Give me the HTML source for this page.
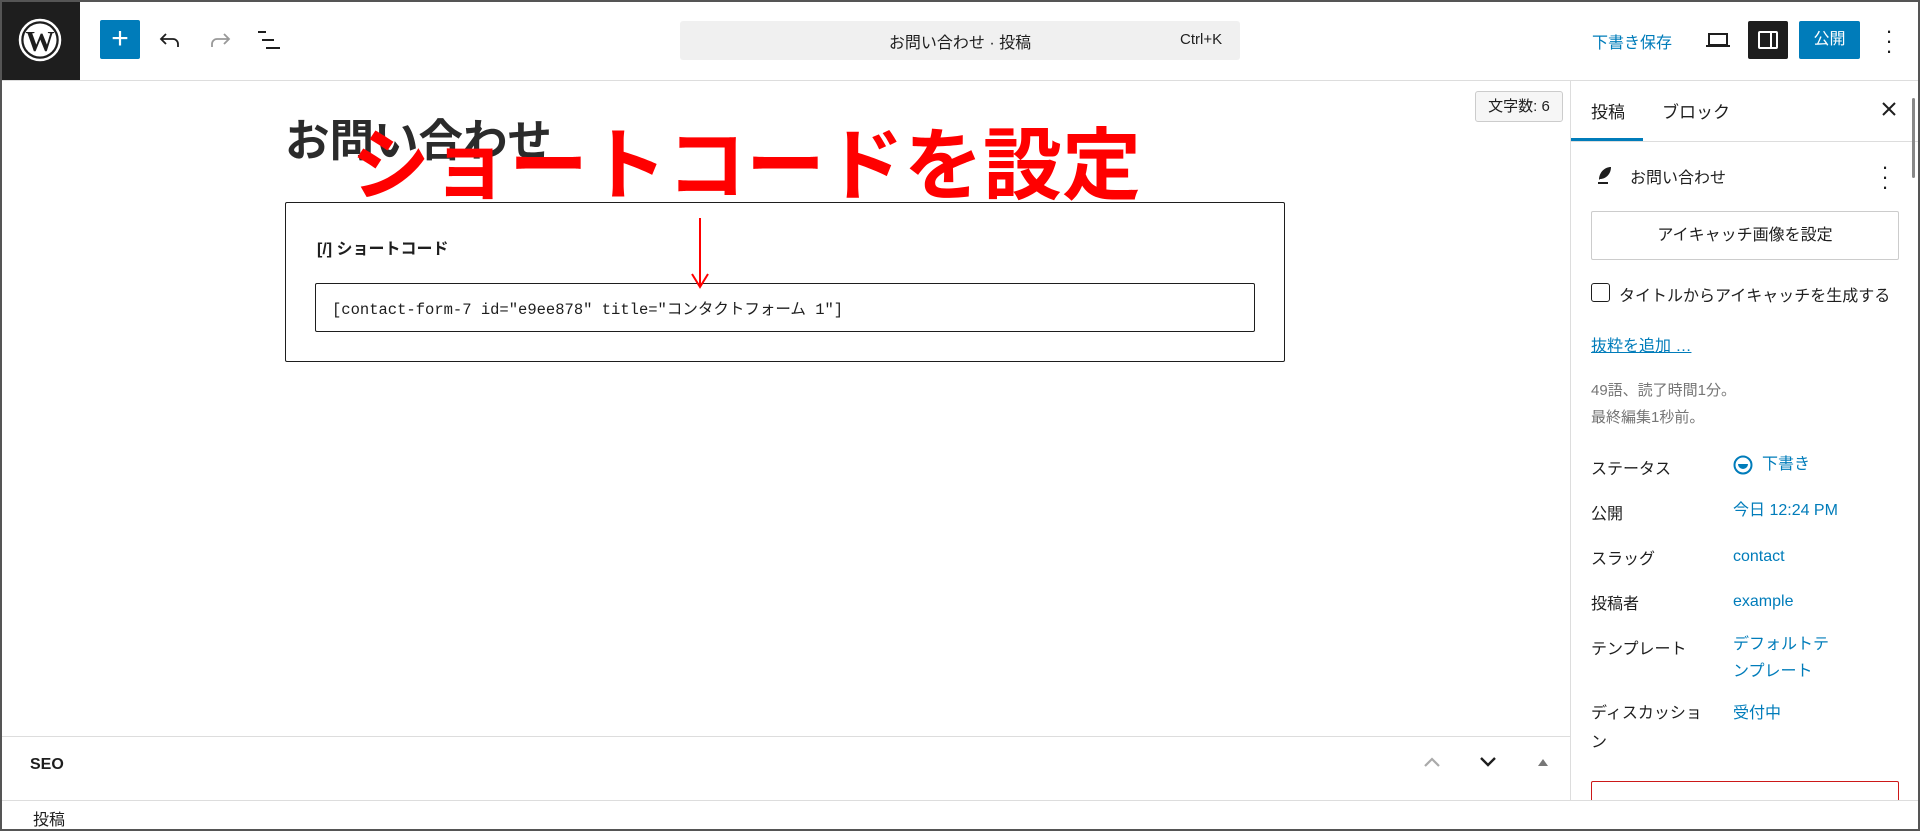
<!DOCTYPE html>
<html><head><meta charset="utf-8"><style>
*{box-sizing:border-box;margin:0;padding:0}
body{width:1920px;height:831px;overflow:hidden;background:#fff;font-family:"Liberation Sans","Noto Sans CJK JP",sans-serif;color:#1e1e1e;position:relative;font-size:16px}
.a{position:absolute}
.frame{position:absolute;left:0;top:0;width:1920px;height:831px;border:2px solid #555;pointer-events:none;z-index:50}
.blue{color:#007cba}
.row{position:absolute;left:1591px;font-size:16px}
.val{position:absolute;left:1733px;font-size:16px;color:#007cba;line-height:27px}
</style></head><body>
<div class="frame"></div>
<div class="a" style="left:0;top:0;width:1920px;height:81px;border-bottom:1px solid #ddd"></div>
<div class="a" style="left:0;top:0;width:80px;height:80px;background:#1e1e1e">
<svg class="a" style="left:18px;top:18px" width="44" height="44" viewBox="0 0 44 44"><circle cx="22" cy="22" r="20" fill="none" stroke="#fff" stroke-width="2.5"/><circle cx="22" cy="22" r="16.5" fill="#fff"/><text x="22" y="33" text-anchor="middle" font-family="Liberation Serif,serif" font-weight="bold" font-size="29" fill="#1e1e1e">W</text></svg></div>
<div class="a" style="left:100px;top:20px;width:40px;height:39px;background:#007cba;border-radius:2px;color:#fff;font-size:30px;line-height:37px;text-align:center">+</div>
<svg class="a" style="left:158px;top:28px" width="24" height="24" viewBox="0 0 24 24"><path d="M8 6 L3 11 L8 16 M3 11 H15 a5 5 0 0 1 5 5 V19" fill="none" stroke="#1e1e1e" stroke-width="1.8"/></svg>
<svg class="a" style="left:208px;top:28px" width="24" height="24" viewBox="0 0 24 24"><path d="M16 6 L21 11 L16 16 M21 11 H9 a5 5 0 0 0 -5 5 V19" fill="none" stroke="#999" stroke-width="1.8"/></svg>
<svg class="a" style="left:256px;top:28px" width="26" height="24" viewBox="0 0 26 24"><path d="M2 4 H10 M6 12 H18 M10 20 H24" stroke="#1e1e1e" stroke-width="2"/></svg>
<div class="a" style="left:680px;top:21px;width:560px;height:39px;background:#f0f0f0;border-radius:3px"></div>
<div class="a" style="left:680px;top:29px;width:560px;text-align:center;font-size:16px;color:#1e1e1e">お問い合わせ · 投稿</div>
<div class="a" style="left:1180px;top:31px;font-size:15px;color:#1e1e1e">Ctrl+K</div>
<div class="a blue" style="left:1592px;top:29px;font-size:16px">下書き保存</div>
<svg class="a" style="left:1704px;top:28px" width="28" height="24" viewBox="0 0 28 24"><rect x="5" y="6" width="18" height="11" fill="none" stroke="#1e1e1e" stroke-width="2"/><path d="M2 18 H26" stroke="#1e1e1e" stroke-width="2"/></svg>
<div class="a" style="left:1748px;top:21px;width:40px;height:38px;background:#1e1e1e;border-radius:2px"><div class="a" style="left:10px;top:10px;width:20px;height:18px;border:2px solid #fff;border-radius:2px"></div><div class="a" style="left:22px;top:10px;width:2px;height:18px;background:#fff"></div></div>
<div class="a" style="left:1799px;top:21px;width:61px;height:38px;background:#007cba;border-radius:2px;color:#fff;font-size:16px;line-height:38px;text-align:center">公開</div>
<div class="a" style="left:1884px;top:26px;font-size:22px;line-height:10px;width:10px;text-align:center">·<br>·<br>·</div>

<div class="a" style="left:1475px;top:91px;width:88px;height:31px;border:1px solid #ccc;border-radius:3px;background:#f6f6f6;font-size:15px;text-align:center;line-height:29px">文字数: 6</div>
<div class="a" style="left:285px;top:104px;font-size:44.5px;font-weight:bold;color:#2b2b2b">お問い合わせ</div>
<div class="a" style="left:351px;top:116px;font-size:79px;font-weight:bold;color:#f00;white-space:nowrap;line-height:100px">ショートコードを設定</div>
<div class="a" style="left:285px;top:202px;width:1000px;height:160px;border:1px solid #1e1e1e;border-radius:2px"></div>
<div class="a" style="left:317px;top:235px;font-size:16px;font-weight:bold">[/] ショートコード</div>
<div class="a" style="left:315px;top:283px;width:940px;height:49px;border:1px solid #1e1e1e;border-radius:2px;background:#fff"></div>
<div class="a" style="left:332px;top:297px;font-family:'Liberation Mono','Noto Sans CJK JP',monospace;font-size:15.5px">[contact-form-7 id="e9ee878" title="コンタクトフォーム 1"]</div>
<svg class="a" style="left:690px;top:218px" width="20" height="72" viewBox="0 0 20 72"><path d="M10 0 V68 M2 56 L10 69 L18 56" fill="none" stroke="#f00" stroke-width="2"/></svg>

<div class="a" style="left:0;top:736px;width:1570px;height:1px;background:#ddd"></div>
<div class="a" style="left:30px;top:756px;font-size:16px;font-weight:bold;color:#1e1e1e">SEO</div>
<svg class="a" style="left:1422px;top:755px" width="20" height="14" viewBox="0 0 20 14"><path d="M3 11 L10 4 L17 11" fill="none" stroke="#aaa" stroke-width="2.2"/></svg>
<svg class="a" style="left:1478px;top:755px" width="20" height="14" viewBox="0 0 20 14"><path d="M3 3 L10 10 L17 3" fill="none" stroke="#1e1e1e" stroke-width="2.4"/></svg>
<svg class="a" style="left:1536px;top:757px" width="14" height="10" viewBox="0 0 14 10"><path d="M2 9 L7 2 L12 9 Z" fill="#777"/></svg>

<div class="a" style="left:1570px;top:81px;width:1px;height:720px;background:#ddd"></div>
<div class="a" style="left:1591px;top:98px;font-size:17px">投稿</div>
<div class="a" style="left:1662px;top:98px;font-size:17px">ブロック</div>
<div class="a" style="left:1571px;top:141px;width:349px;height:1px;background:#ddd"></div>
<div class="a" style="left:1571px;top:138px;width:72px;height:3px;background:#007cba"></div>
<svg class="a" style="left:1880px;top:100px" width="18" height="18" viewBox="0 0 18 18"><path d="M3 3 L15 15 M15 3 L3 15" stroke="#1e1e1e" stroke-width="2"/></svg>
<div class="a" style="left:1912px;top:98px;width:3px;height:80px;background:#888;border-radius:2px"></div>
<svg class="a" style="left:1595px;top:164px" width="20" height="22" viewBox="0 0 20 22"><path d="M4 16 C4 8 10 3 16 3 C16 10 11 15 5 15 Z" fill="#1e1e1e"/><path d="M3 19 H13" stroke="#1e1e1e" stroke-width="2"/></svg>
<div class="a" style="left:1630px;top:164px;font-size:16px">お問い合わせ</div>
<div class="a" style="left:1880px;top:162px;font-size:22px;line-height:10px;width:10px;text-align:center">·<br>·<br>·</div>
<div class="a" style="left:1591px;top:211px;width:308px;height:49px;border:1px solid #ccc;border-radius:2px;text-align:center;line-height:47px;font-size:16px">アイキャッチ画像を設定</div>
<div class="a" style="left:1591px;top:283px;width:19px;height:19px;border:1.5px solid #1e1e1e;border-radius:3px"></div>
<div class="a" style="left:1619px;top:282px;font-size:16px">タイトルからアイキャッチを生成する</div>
<div class="a blue" style="left:1591px;top:332px;font-size:16px;text-decoration:underline">抜粋を追加 …</div>
<div class="a" style="left:1591px;top:377px;font-size:15px;color:#757575;line-height:27px">49語、読了時間1分。<br>最終編集1秒前。</div>
<div class="row" style="top:455px">ステータス</div>
<svg class="a" style="left:1733px;top:455px" width="20" height="20" viewBox="0 0 20 20"><circle cx="10" cy="10" r="8.5" fill="none" stroke="#007cba" stroke-width="2"/><path d="M5 9 H15 A5 5 0 0 1 5 9 Z" fill="#007cba"/></svg>
<div class="val" style="left:1762px;top:451px">下書き</div>
<div class="row" style="top:500px">公開</div><div class="val" style="top:497px">今日 12:24 PM</div>
<div class="row" style="top:545px">スラッグ</div><div class="val" style="top:543px">contact</div>
<div class="row" style="top:590px">投稿者</div><div class="val" style="top:588px">example</div>
<div class="row" style="top:635px">テンプレート</div><div class="val" style="top:631px">デフォルトテ<br>ンプレート</div>
<div class="row" style="line-height:29px;top:699px">ディスカッショ<br>ン</div><div class="val" style="top:700px">受付中</div>
<div class="a" style="left:1591px;top:781px;width:308px;height:40px;border:1px solid #cc1818;border-radius:2px"></div>

<div class="a" style="left:0;top:800px;width:1920px;height:31px;background:#fff;border-top:1px solid #ddd"></div>
<div class="a" style="left:33px;top:806px;font-size:16px">投稿</div>
</body></html>
